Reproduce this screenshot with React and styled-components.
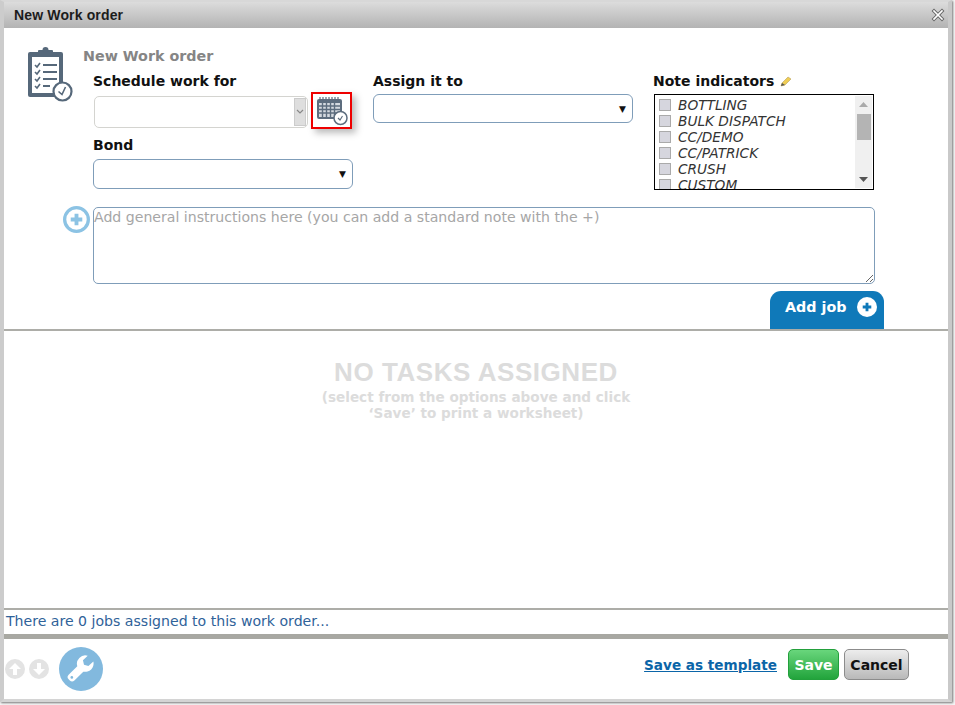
import React from 'react';
import styled, { createGlobalStyle } from 'styled-components';

const GlobalStyle = createGlobalStyle`
  html, body {
    margin: 0;
    padding: 0;
    background: #fff;
  }

  * {
    box-sizing: border-box;
  }
`;

const Page = styled.div`
  width: 955px;
  height: 705px;
  overflow: hidden;
  background: #f6f6f6;
  font-family: "DejaVu Sans", Verdana, sans-serif;
`;

const Dialog = styled.div`
  width: 952px;
  height: 702px;
  display: flex;
  flex-direction: column;
  background: #fff;
  border-style: solid;
  border-color: #d8d8d8 #c9c9c9 #d4d4d4 #cccccc;
  border-width: 2px 4px 3px 4px;
  box-shadow: 1px 1px 2px #777;
`;

const TitleBar = styled.div`
  height: 26px;
  flex: none;
  display: flex;
  align-items: center;
  justify-content: space-between;
  padding: 0 3px 0 10px;
  background: linear-gradient(#dcdcdc, #b3b3b3);
  font-family: "Liberation Sans", Arial, sans-serif;
  font-size: 14px;
  font-weight: bold;
  letter-spacing: 0.15px;
  color: #1c1c1c;
`;

const TopSection = styled.div`
  height: 303px;
  flex: none;
  display: flex;
  flex-direction: column;
  padding: 19px 0 0 24px;
  border-bottom: 2px solid #adada8;
`;

const Header = styled.div`
  height: 16px;
  display: flex;
`;

const ClipboardBox = styled.div`
  width: 55px;
  height: 16px;
`;

const Heading = styled.div`
  font-size: 14.3px;
  line-height: 18px;
  font-weight: bold;
  color: #858585;
`;

const FieldGrid = styled.div`
  display: grid;
  grid-template-columns: repeat(3, 280px);
  margin: 9px 0 0 65px;
  height: 128px;
`;

const Column = styled.div`
  display: flex;
  flex-direction: column;
  align-items: flex-start;
`;

const Label = styled.div`
  height: 18px;
  display: flex;
  align-items: center;
  gap: 6px;
  font-size: 14px;
  font-weight: bold;
  color: #111;
  margin-top: ${(p) => p.$top || 0}px;
`;

const DateRow = styled.div`
  display: flex;
  align-items: flex-start;
  margin-top: 2px;
`;

const DateInput = styled.div`
  width: 214px;
  height: 32px;
  margin: 4px 0 0 1px;
  display: flex;
  justify-content: flex-end;
  padding: 1px;
  background: #fff;
  border: 1px solid #d4d4d0;
  border-radius: 5px;
`;

const Spinner = styled.div`
  width: 12px;
  display: flex;
  align-items: center;
  justify-content: center;
  background: #dedede;
  color: #888;
  border: 1px solid #ccc;
`;

const CalendarButton = styled.button`
  width: 41px;
  height: 37px;
  padding: 0;
  margin-left: 3px;
  display: flex;
  align-items: center;
  justify-content: center;
  background: #fff;
  border: 2px solid #ee0000;
  box-shadow: 4px 4px 7px #bbb;
`;

const SelectBox = styled.div`
  width: 260px;
  height: ${(p) => p.$height || 30}px;
  margin-top: ${(p) => p.$top || 0}px;
  display: flex;
  align-items: center;
  justify-content: flex-end;
  padding-right: 6px;
  background: #fff;
  border: 1px solid #7f9db9;
  border-radius: 6px;
  color: #111;
  font-size: 9px;
`;

const NoteBox = styled.div`
  width: 220px;
  height: 96px;
  margin: 4px 0 0 1px;
  display: flex;
  background: #fff;
  border: 1px solid #000;
`;

const NoteList = styled.div`
  flex: 1;
  overflow: hidden;
  padding: 2px 0 0 4px;
`;

const NoteItem = styled.div`
  height: 16px;
  display: flex;
  align-items: center;
  gap: 7px;
  font-size: 13.7px;
  font-style: italic;
  color: #333;
`;

const Check = styled.span`
  width: 12px;
  height: 12px;
  flex: none;
  background: #d6d6de;
  border: 1px solid #aaa;
`;

const Scrollbar = styled.div`
  width: 17px;
  margin: 1px 1px 1px 0;
  display: flex;
  flex-direction: column;
  align-items: stretch;
  background: #f0f0f0;
  color: #666;
`;

const ScrollArrow = styled.div`
  height: 17px;
  flex: none;
  display: flex;
  align-items: center;
  justify-content: center;
`;

const ScrollThumb = styled.div`
  height: 26px;
  margin-top: 1px;
  background: #b4b4b4;
  width: 14px;
  align-self: center;
`;

const ScrollSpace = styled.div`
  flex: 1;
`;

const NotesRow = styled.div`
  display: flex;
  align-items: flex-start;
  margin: 6px 0 0 35px;
`;

const PlusBox = styled.div`
  width: 30px;
  display: flex;
  justify-content: flex-start;
`;

const NotesArea = styled.textarea`
  width: 782px;
  height: 77px;
  padding: 0;
  margin: 1px 0 0;
  display: block;
  font-family: "DejaVu Sans", Verdana, sans-serif;
  font-size: 14.1px;
  line-height: 18px;
  background: #fff;
  border: 1px solid #7f9db9;
  border-radius: 5px;
  outline: none;

  &::placeholder {
    color: #a6a6a6;
    opacity: 1;
  }
`;

const TabRow = styled.div`
  display: flex;
  justify-content: flex-end;
  margin-top: auto;
  padding-right: 64px;
`;

const AddJobTab = styled.button`
  width: 114px;
  height: 38px;
  padding: 0 7px 6px 15px;
  display: flex;
  align-items: center;
  justify-content: space-between;
  background: #0f79b9;
  border: none;
  border-radius: 11px 11px 0 0;
  color: #fff;
  font-family: "DejaVu Sans", Verdana, sans-serif;
  font-size: 14.3px;
  font-weight: bold;
`;

const Empty = styled.div`
  height: 277px;
  flex: none;
  padding-top: 27px;
  display: flex;
  flex-direction: column;
  align-items: center;
  color: #dcdcdc;
  font-family: "DejaVu Sans", Verdana, sans-serif;
  font-weight: bold;
`;

const EmptyTitle = styled.div`
  font-family: "Liberation Sans", Arial, sans-serif;
  font-size: 26px;
  line-height: 29px;
  letter-spacing: 0.55px;
  margin-bottom: 2px;
`;

const EmptyLine = styled.div`
  font-size: 13.6px;
  line-height: 16px;
`;

const StatusBar = styled.div`
  height: 31px;
  flex: none;
  padding: 2px 0 0 2px;
  border-top: 2px solid #adada8;
  border-bottom: 5px solid #a8a8a2;
  font-size: 14.1px;
  line-height: 18px;
  color: #2f6299;
`;

const Footer = styled.div`
  flex: 1;
  display: flex;
  align-items: center;
  padding: 0 39px 0 1px;
`;

const ArrowGroup = styled.div`
  display: flex;
  gap: 4px;
  margin-right: 10px;
`;

const ToolButton = styled.div`
  width: 44px;
  height: 44px;
  border-radius: 50%;
  display: flex;
  align-items: center;
  justify-content: center;
  background: #82b9de;
`;

const Actions = styled.div`
  margin: 0 0 9px auto;
  display: flex;
  align-items: center;
  gap: 5px;
`;

const TemplateLink = styled.a`
  margin-right: 6px;
  font-size: 13.6px;
  font-weight: bold;
  text-decoration: underline;
  color: #0b65a8;
`;

const ActionButton = styled.button`
  height: 31px;
  padding: 0;
  width: ${(p) => (p.$save ? 51 : 65)}px;
  border: 1px solid ${(p) => (p.$save ? '#23a03c' : '#8c8c8c')};
  border-radius: 5px;
  background: ${(p) => (p.$save
    ? 'linear-gradient(#69d67c, #22a43c)'
    : 'linear-gradient(#ededed, #b9b9b9)')};
  color: ${(p) => (p.$save ? '#fff' : '#111')};
  font-family: "DejaVu Sans", Verdana, sans-serif;
  font-size: 14px;
  font-weight: bold;
`;

const ClipboardIcon = () => (
  <svg width="46" height="56" viewBox="0 0 46 56" style={{ display: 'block' }}>
    <rect x="0" y="5" width="35" height="45" rx="2" fill="#56687a" />
    <rect x="4" y="10" width="27" height="36" fill="#fff" />
    <rect x="10" y="3" width="15" height="6" rx="1" fill="#56687a" />
    <circle cx="17.5" cy="3" r="3" fill="#56687a" />
    <path d="M7 18l2 2 3-4M7 25l2 2 3-4M7 32l2 2 3-4M7 39l2 2 3-4" stroke="#56687a" fill="none" strokeWidth="1.6" />
    <path d="M15 18h14M15 25h14M15 32h14M15 39h7" stroke="#56687a" strokeWidth="2.2" />
    <circle cx="34.5" cy="44.5" r="9" fill="#fff" stroke="#56687a" strokeWidth="2.2" />
    <path d="M30.5 44.5l3.5 3 3.5-7.500" fill="none" stroke="#56687a" strokeWidth="1.6" />
  </svg>
);

const CalendarIcon = () => (
  <svg width="32" height="30" viewBox="0 0 32 30">
    <rect x="1" y="3" width="25" height="20" rx="2" fill="#5d6d7e" />
    <rect x="3" y="7" width="21" height="14" fill="#d5dae0" />
    <path d="M4 1v4M7 1v4M10 1v4M13 1v4M16 1v4M19 1v4M22 1v4" stroke="#5d6d7e" strokeWidth="1.2" />
    <path d="M3 10h21M3 13.5h21M3 17h21" stroke="#5d6d7e" strokeWidth="1.4" />
    <path d="M6.5 7v14M10.5 7v14M14.5 7v14M18.5 7v14" stroke="#5d6d7e" strokeWidth="1.4" />
    <circle cx="24.5" cy="22" r="6.5" fill="#fff" stroke="#5d6d7e" strokeWidth="1.5" />
    <path d="M22 22l2 2 2.500-4" fill="none" stroke="#5d6d7e" strokeWidth="1.1" />
  </svg>
);

const PencilIcon = () => (
  <svg width="12" height="12" viewBox="0 0 12 12">
    <path d="M2 8l6-6 3 2-6 6-4 1z" fill="#efcd55" stroke="#b9a15a" strokeWidth="0.6" />
    <path d="M1 11l1-3 3 2z" fill="#555" />
  </svg>
);

const CloseIcon = () => (
  <svg width="14" height="14" viewBox="0 0 14 14">
    <path d="M3 3l8 8M11 3l-8 8" stroke="#666" strokeWidth="3.4" strokeLinecap="square" />
    <path d="M3 3l8 8M11 3l-8 8" stroke="#fff" strokeWidth="1.6" strokeLinecap="square" />
  </svg>
);

const PlusRing = ({ color, size, ring, bar }) => (
  <svg width={size} height={size} viewBox="0 0 28 28">
    <circle cx="14" cy="14" r={14 - ring / 2} fill={ring ? '#fff' : color} stroke={color} strokeWidth={ring} />
    <path d="M14 8v12M8 14h12" stroke={bar || color} strokeWidth="4" />
  </svg>
);

const ArrowDisc = ({ down }) => (
  <svg width="20" height="20" viewBox="0 0 20 20" style={down ? { transform: 'rotate(180deg)' } : undefined}>
    <circle cx="10" cy="10" r="10" fill="#e3e3e3" />
    <path d="M10 4l6 6h-4v6H8v-6H4z" fill="#fff" />
  </svg>
);

const WrenchIcon = () => (
  <svg width="30" height="30" viewBox="0 0 34 34">
    <path
      d="M31 8.500l-5.600 5.200-5-1.600-1.200-5L24.600 2a9.500 9.500 0 0 0-11.800 11.900L3 23.500a3.700 3.700 0 0 0 0 5.200l1.300 1.300a3.700 3.700 0 0 0 5.200 0l10.100-10a9.500 9.500 0 0 0 11.400-11.500z"
      fill="#fff"
    />
    <circle cx="6.600" cy="26.500" r="1.500" fill="#82b9de" />
  </svg>
);

const notes = ['BOTTLING', 'BULK DISPATCH', 'CC/DEMO', 'CC/PATRICK', 'CRUSH', 'CUSTOM'];

const App = () => (
  <Page>
    <GlobalStyle />
    <Dialog>
      <TitleBar>
        New Work order
        <CloseIcon />
      </TitleBar>

      <TopSection>
        <Header>
          <ClipboardBox>
            <ClipboardIcon />
          </ClipboardBox>
          <Heading>New Work order</Heading>
        </Header>

        <FieldGrid>
          <Column>
            <Label>Schedule work for</Label>
            <DateRow>
              <DateInput>
                <Spinner>
                  <svg width="8" height="6" viewBox="0 0 8 6">
                    <path d="M1 1l3 3 3-3" fill="none" stroke="#888" strokeWidth="1.2" />
                  </svg>
                </Spinner>
              </DateInput>
              <CalendarButton aria-label="Pick a date">
                <CalendarIcon />
              </CalendarButton>
            </DateRow>
            <Label $top={7}>Bond</Label>
            <SelectBox $top={5}>▼</SelectBox>
          </Column>

          <Column>
            <Label>Assign it to</Label>
            <SelectBox $top={4} $height={29}>▼</SelectBox>
          </Column>

          <Column>
            <Label>
              Note indicators
              <PencilIcon />
            </Label>
            <NoteBox>
              <NoteList>
                {notes.map((note) => (
                  <NoteItem key={note}>
                    <Check />
                    {note}
                  </NoteItem>
                ))}
              </NoteList>
              <Scrollbar>
                <ScrollArrow>
                  <svg width="9" height="5" viewBox="0 0 9 5"><path d="M0 5l4.500-5 4.500 5z" fill="#aaa" /></svg>
                </ScrollArrow>
                <ScrollThumb />
                <ScrollSpace />
                <ScrollArrow>
                  <svg width="9" height="5" viewBox="0 0 9 5"><path d="M0 0l4.500 5 4.500-5z" fill="#555" /></svg>
                </ScrollArrow>
              </Scrollbar>
            </NoteBox>
          </Column>
        </FieldGrid>

        <NotesRow>
          <PlusBox>
            <PlusRing color="#8cc3e4" size={27} ring={3.4} />
          </PlusBox>
          <NotesArea placeholder="Add general instructions here (you can add a standard note with the +)" />
        </NotesRow>

        <TabRow>
          <AddJobTab>
            Add job
            <PlusRing color="#fff" size={20} ring={0} bar="#0f79b9" />
          </AddJobTab>
        </TabRow>
      </TopSection>

      <Empty>
        <EmptyTitle>NO TASKS ASSIGNED</EmptyTitle>
        <EmptyLine>(select from the options above and click</EmptyLine>
        <EmptyLine>‘Save’ to print a worksheet)</EmptyLine>
      </Empty>

      <StatusBar>There are 0 jobs assigned to this work order...</StatusBar>

      <Footer>
        <ArrowGroup>
          <ArrowDisc />
          <ArrowDisc down />
        </ArrowGroup>
        <ToolButton>
          <WrenchIcon />
        </ToolButton>
        <Actions>
          <TemplateLink href="#template">Save as template</TemplateLink>
          <ActionButton $save>Save</ActionButton>
          <ActionButton>Cancel</ActionButton>
        </Actions>
      </Footer>
    </Dialog>
  </Page>
);

export default App;
